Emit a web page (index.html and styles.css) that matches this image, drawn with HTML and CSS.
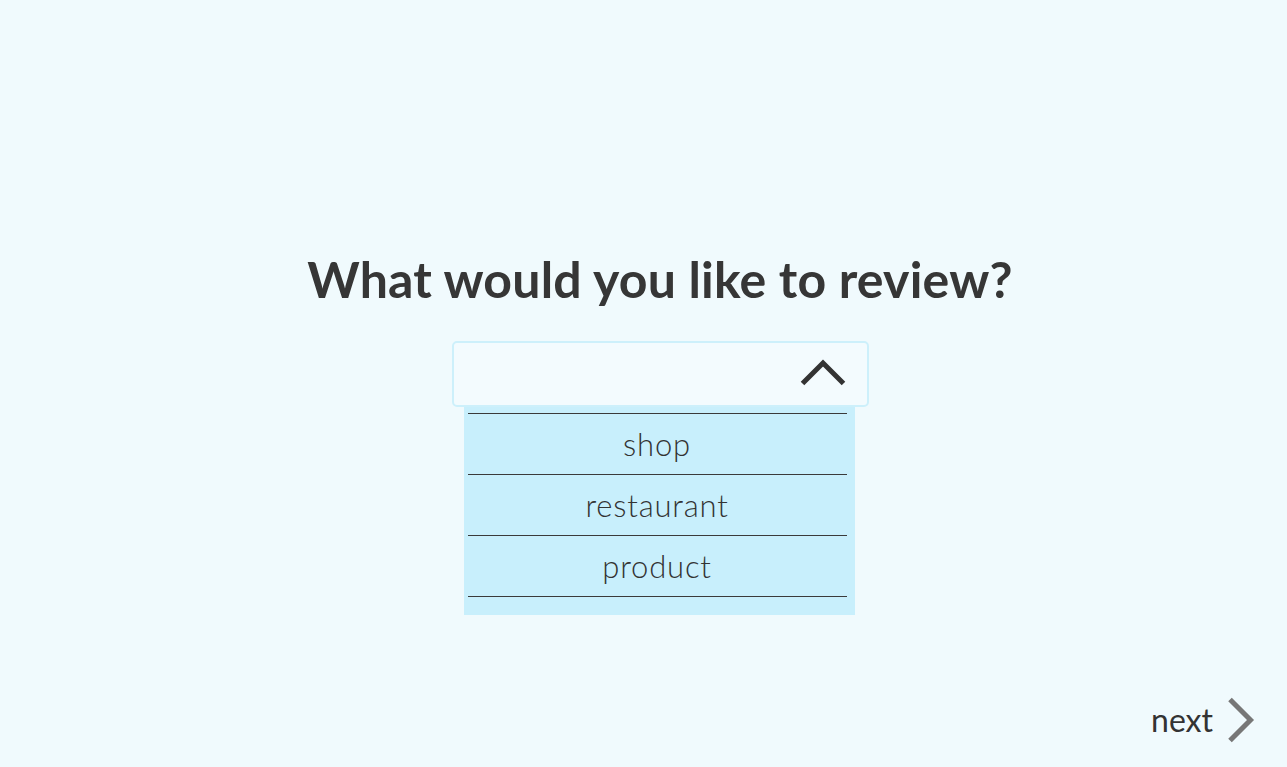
FILE: index.html
```html
<!DOCTYPE html>
<html lang="en">
<head>
<meta charset="utf-8">
<title>Review</title>
<link rel="stylesheet" href="styles.css">
</head>
<body>
<div class="page">
  <main class="main">
    <h1 class="title">What would you like to review?</h1>
    <div class="dropdown">
      <div class="select">
        <svg class="chev-up" width="46" height="28" viewBox="0 0 46 28"><polyline points="2.5,25.5 23,5 43.5,25.5" fill="none" stroke="#333" stroke-width="5"/></svg>
      </div>
      <ul class="menu">
        <li class="item">shop</li>
        <li class="item">restaurant</li>
        <li class="item">product</li>
      </ul>
    </div>
  </main>
  <footer class="footer">
    <span class="next">next</span>
    <svg class="chev-right" width="28" height="46" viewBox="0 0 28 46"><polyline points="3,2.5 23.5,23 3,43.5" fill="none" stroke="#777" stroke-width="5"/></svg>
  </footer>
</div>
</body>
</html>
```
FILE: styles.css
```css
html, body {
  margin: 0;
  padding: 0;
  background: #f0fafd;
  font-family: Lato, "Noto Sans", sans-serif;
  color: #333;
}
.page {
  height: 767px;
  display: flex;
  flex-direction: column;
  box-sizing: border-box;
}
.main {
  display: flex;
  flex-direction: column;
  align-items: center;
  padding-top: 247px;
  padding-left: 33px;
}
.title {
  margin: 0;
  font-size: 50px;
  font-weight: 700;
  line-height: 64px;
  color: #363636;
  letter-spacing: 0.2px;
}
.dropdown {
  margin-top: 30px;
  width: 417px;
}
.select {
  box-sizing: border-box;
  height: 66px;
  border: 2px solid #cdf0fb;
  border-radius: 5px;
  background: #f3fbfe;
  display: flex;
  justify-content: flex-end;
  align-items: center;
  padding-right: 21px;
}
.chev-up {
  display: block;
  margin-top: -4px;
}
.menu {
  list-style: none;
  margin: 0 0 0 12px;
  width: 391px;
  box-sizing: border-box;
  padding: 6px 8px 18px 4px;
  background: #c8effc;
}
.item {
  height: 60px;
  border-top: 1px solid #3a3a3a;
  display: flex;
  align-items: center;
  justify-content: center;
  font-size: 31px;
  font-weight: 300;
  color: #333;
  letter-spacing: 0.8px;
}
.item:last-child {
  border-bottom: 1px solid #3a3a3a;
}
.footer {
  margin-top: auto;
  display: flex;
  justify-content: flex-end;
  align-items: center;
  padding: 0 32px 24px 0;
  gap: 14px;
}
.next {
  font-size: 32px;
  color: #333;
  font-weight: 400;
  line-height: 46px;
}
.chev-right {
  display: block;
}
```
